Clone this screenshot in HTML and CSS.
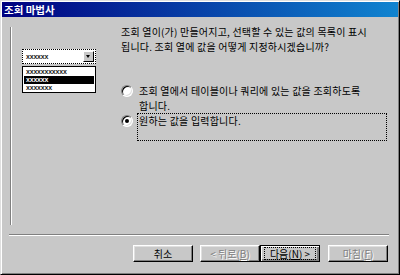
FILE: index.html
```html
<!DOCTYPE html>
<html>
<head>
  <meta charset="utf-8">
  <title>조회 마법사</title>
  <link rel="stylesheet" href="styles.css">
</head>
<body>
  <div class="window">
    <div class="titlebar">조회 마법사</div>
    <div class="main">
      <div class="picture">
        <div class="combo">
          <div class="combo-field">
            <span class="fake">xxxxxx</span>
            <span class="combo-arrow"></span>
          </div>
          <ul class="combo-list">
            <li>xxxxxxxxxxx</li>
            <li class="selected">xxxxxx</li>
            <li>xxxxxxx</li>
          </ul>
        </div>
      </div>
      <div class="panel">
        <p class="intro">조회 열이(가) 만들어지고, 선택할 수 있는 값의 목록이 표시<br>됩니다. 조회 열에 값을 어떻게 지정하시겠습니까?</p>
        <div class="options">
          <div class="option">
            <span class="radio"></span>
            <span class="option-text">조회 열에서 테이블이나 쿼리에 있는 값을 조회하도록<br>합니다.</span>
          </div>
          <div class="option">
            <span class="radio checked"></span>
            <span class="option-text focus">원하는 값을 입력합니다.</span>
          </div>
        </div>
      </div>
    </div>
    <div class="separator"></div>
    <div class="buttons">
      <button class="btn">취소</button>
      <button class="btn disabled">&lt; 뒤로(<u>B</u>)</button>
      <button class="btn default"><span class="focus-ring">다음(<u>N</u>) &gt;</span></button>
      <button class="btn disabled finish">마침(<u>F</u>)</button>
    </div>
  </div>
</body>
</html>
```

FILE: styles.css
```css
body {
  margin: 0;
  background: #c8c8c8;
  font-family: "Noto Sans CJK KR", "Noto Sans", sans-serif;
  font-size: 10px;
  color: #000;
}
.window {
  display: flex;
  flex-direction: column;
  width: 400px;
  height: 275px;
  box-sizing: border-box;
  padding: 1px;
  background: #c8c8c8;
  border: 1px solid;
  border-color: #dfdfdf #000 #000 #dfdfdf;
  box-shadow: inset 1px 1px #fff, inset -1px -1px #808080;
}
.titlebar {
  height: 15px;
  line-height: 15px;
  padding-left: 2px;
  color: #fff;
  font-weight: bold;
  font-size: 10.5px;
  background: linear-gradient(to right, #000080, #1084d0);
}
.main {
  display: flex;
  height: 217px;
}
.picture {
  margin: 10px 0 0 8px;
  width: 106px;
  height: 198px;
  border-left: 1px solid #808080;
  box-shadow: inset 1px 0 #fff;
}
.combo {
  margin: 22px 0 0 11px;
  width: 74px;
}
.combo-field {
  display: flex;
  align-items: center;
  justify-content: space-between;
  height: 15px;
  box-sizing: border-box;
  border: 1px dotted #000;
  background: #fff;
  padding: 0 1px 0 3px;
}
.fake {
  font-family: "Liberation Sans", sans-serif;
  font-size: 7px;
  font-weight: bold;
  letter-spacing: -0.2px;
  color: #222;
}
.combo-arrow {
  position: relative;
  width: 11px;
  height: 11px;
  box-sizing: border-box;
  background: #c8c8c8;
  border: 1px solid;
  border-color: #fff #000 #000 #fff;
}
.combo-arrow::after {
  content: "";
  position: absolute;
  left: 2px;
  top: 3px;
  border-left: 2.5px solid transparent;
  border-right: 2.5px solid transparent;
  border-top: 3px solid #000;
}
.combo-list {
  list-style: none;
  margin: 2px 0 0;
  padding: 1px 1px;
  height: 27px;
  box-sizing: border-box;
  border: 1px solid #000;
  background: #fff;
  font-family: "Liberation Sans", sans-serif;
  font-size: 7px;
  font-weight: bold;
  letter-spacing: -0.2px;
  color: #222;
}
.combo-list li {
  height: 8px;
  line-height: 8px;
  padding-left: 2px;
}
.combo-list .selected {
  background: #000;
  color: #fff;
}
.panel {
  padding: 8px 0 0 4px;
  letter-spacing: 0.2px;
}
.intro {
  margin: 0;
  line-height: 14.5px;
  white-space: nowrap;
}
.options {
  margin-top: 30px;
}
.option {
  display: flex;
  align-items: flex-start;
}
.radio {
  position: relative;
  width: 12px;
  height: 12px;
  margin-top: 1px;
  margin-right: 4px;
  box-sizing: border-box;
  border-radius: 50%;
  background: #fff;
  border: 1px solid;
  border-color: #808080 #fff #fff #808080;
  box-shadow: inset 1px 1px #000, inset -1px -1px #dfdfdf;
}
.radio.checked {
  margin-top: 2px;
}
.radio.checked::after {
  content: "";
  position: absolute;
  left: 3px;
  top: 3px;
  width: 4px;
  height: 4px;
  border-radius: 50%;
  background: #000;
}
.option-text {
  width: 246px;
  padding: 0 2px;
  line-height: 14.5px;
  white-space: nowrap;
}
.option-text.focus {
  height: 26px;
  padding: 0 1px;
  border: 1px dotted #000;
}
.separator {
  margin: 0 9px 0 7px;
  border-top: 1px solid #808080;
  border-bottom: 1px solid #fff;
}
.buttons {
  display: flex;
  justify-content: flex-end;
  margin-top: 9px;
  padding-right: 10px;
}
.btn {
  width: 60px;
  height: 17px;
  padding: 0;
  font-family: inherit;
  font-size: 10px;
  line-height: 13px;
  color: #000;
  background: #c8c8c8;
  border: 1px solid;
  border-color: #fff #000 #000 #fff;
  box-shadow: inset -1px -1px #808080, inset 1px 1px #dfdfdf;
}
.btn:first-child {
  margin-right: 7px;
}
.btn.disabled {
  color: #808080;
  text-shadow: 1px 1px #fff;
}
.btn.default {
  border-color: #000;
  box-shadow: inset 1px 1px #fff, inset -2px -2px #808080;
}
.btn.finish {
  margin-left: 8px;
}
.focus-ring {
  display: block;
  margin: 0 3px;
  border: 1px dotted #000;
  line-height: 11px;
}
```
